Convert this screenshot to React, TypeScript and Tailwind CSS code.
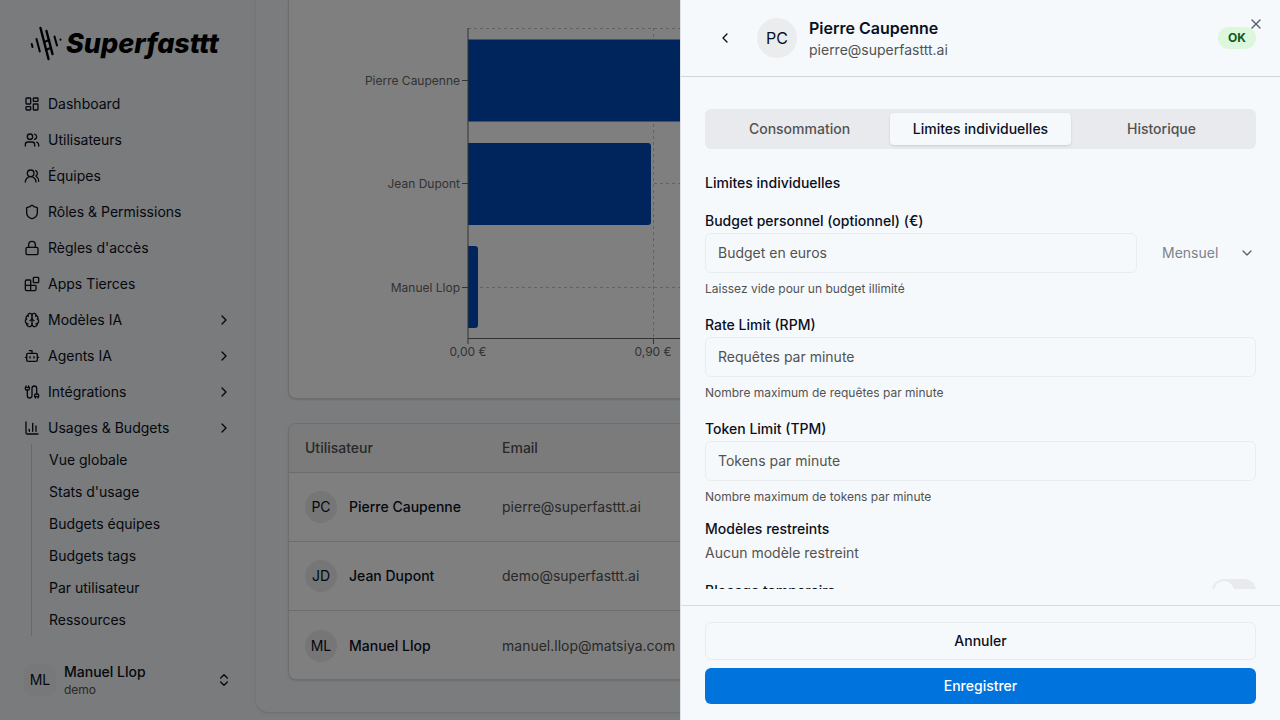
import { useState } from "react";
import {
  Blocks,
  Bot,
  Brain,
  ChartColumn,
  ChevronDown,
  ChevronLeft,
  ChevronRight,
  ChevronsUpDown,
  LayoutDashboard,
  Lock,
  Shield,
  Users,
  UsersRound,
  X,
} from "lucide-react";

interface NavItem {
  label: string;
  icon: React.ComponentType<{ className?: string }>;
  nested?: boolean;
}

function CableIcon({ className }: { className?: string }) {
  return (
    <svg
      className={className}
      viewBox="0 0 24 24"
      fill="none"
      stroke="currentColor"
      strokeWidth="2"
      strokeLinecap="round"
      strokeLinejoin="round"
    >
      <path d="M4 9a2 2 0 0 1-2-2V5h6v2a2 2 0 0 1-2 2ZM3 5V3M7 5V3" />
      <path d="M19 15V6.500a3.500 3.500 0 0 0-7 0v11a3.500 3.500 0 0 1-7 0V9" />
      <path d="M17 21v-2M21 21v-2M22 19h-6v-2a2 2 0 0 1 2-2h2a2 2 0 0 1 2 2Z" />
    </svg>
  );
}

const NAV: NavItem[] = [
  { label: "Dashboard", icon: LayoutDashboard },
  { label: "Utilisateurs", icon: Users },
  { label: "Équipes", icon: UsersRound },
  { label: "Rôles & Permissions", icon: Shield },
  { label: "Règles d'accès", icon: Lock },
  { label: "Apps Tierces", icon: Blocks },
  { label: "Modèles IA", icon: Brain, nested: true },
  { label: "Agents IA", icon: Bot, nested: true },
  { label: "Intégrations", icon: CableIcon, nested: true },
  { label: "Usages & Budgets", icon: ChartColumn, nested: true },
];

const SUB_NAV = [
  "Vue globale",
  "Stats d'usage",
  "Budgets équipes",
  "Budgets tags",
  "Par utilisateur",
  "Ressources",
];

const USERS = [
  { initials: "PC", name: "Pierre Caupenne", email: "pierre@superfasttt.ai" },
  { initials: "JD", name: "Jean Dupont", email: "demo@superfasttt.ai" },
  { initials: "ML", name: "Manuel Llop", email: "manuel.llop@matsiya.com" },
];

const TABS = ["Consommation", "Limites individuelles", "Historique"];

function Logo() {
  return (
    <div className="flex items-center gap-1 text-black">
      <svg width="34" height="36" viewBox="0 0 34 36" fill="none" stroke="currentColor" strokeWidth="2" strokeLinecap="round">
        <path d="M3.700 18l.8 3M8.500 13l3.300 12.500" />
        <path d="M12.500 2l8 31M18.500 5l6 23" strokeWidth="2.400" />
        <path d="M16 16l5.300-2M18 23.700l4.700-1.700" />
        <path d="M26.500 10.500l2.500 9M32.500 13.500v.2" />
      </svg>
      <span className="text-[27px] leading-8 font-extrabold italic">Superfasttt</span>
    </div>
  );
}

function Sidebar() {
  return (
    <aside className="flex w-64 shrink-0 flex-col">
      <div className="px-7 py-[26px]">
        <Logo />
      </div>
      <nav className="flex-1 px-4">
        <ul className="space-y-1">
          {NAV.map(({ label, icon: Icon, nested }) => (
            <li key={label}>
              <a href="#" className="flex h-8 items-center gap-2 px-2">
                <Icon className="size-4" />
                <span className="flex-1">{label}</span>
                {nested && <ChevronRight className="size-4" />}
              </a>
            </li>
          ))}
        </ul>
        <ul className="ml-[15px] border-l border-slate-300 pl-[17px]">
          {SUB_NAV.map((label) => (
            <li key={label}>
              <a href="#" className="flex h-8 items-center">
                {label}
              </a>
            </li>
          ))}
        </ul>
      </nav>
      <button className="m-4 flex h-12 items-center gap-2 px-2 text-left">
        <span className="flex size-8 items-center justify-center rounded-lg bg-[#f0f1f3]">ML</span>
        <span className="flex-1">
          <span className="block leading-5 font-medium">Manuel Llop</span>
          <span className="block text-xs leading-4 text-neutral-600">demo</span>
        </span>
        <ChevronsUpDown className="size-4" />
      </button>
    </aside>
  );
}

function BudgetChart() {
  return (
    <svg className="h-[398px] w-full" role="img" aria-label="Budget par utilisateur">
      <g stroke="#c4c4c4" strokeDasharray="3 3">
        <path d="M179 28.500h900M179 80.500h900M179 183.500h900M179 287.500h900M364.500 28v310M550.500 28v310" />
      </g>
      <g fill="#004ab8">
        <path d="M179 39.500h700v82H179z" />
        <path d="M179 143h180q3 0 3 3v76q0 3-3 3H179z" />
        <path d="M179 246h7q3 0 3 3v76q0 3-3 3h-7z" />
      </g>
      <g stroke="#666">
        <path d="M179 28v316M179 338.500h900M173 80.500h6M173 183.500h6M173 287.500h6M364.500 338v6" />
      </g>
      <g fill="#666" fontSize="12" textAnchor="end">
        <text x="171" y="85">Pierre Caupenne</text>
        <text x="171" y="188">Jean Dupont</text>
        <text x="171" y="292">Manuel Llop</text>
      </g>
      <g fill="#666" fontSize="12" textAnchor="middle">
        <text x="179" y="356">0,00 €</text>
        <text x="364" y="356">0,90 €</text>
      </g>
    </svg>
  );
}

function UsersTable() {
  return (
    <div className="overflow-hidden rounded-lg border border-[#dcdddf] bg-white shadow-sm">
      <table className="w-full text-left">
        <thead className="bg-[#f6f7f7] text-neutral-600">
          <tr className="h-12 border-b border-[#d6d8da]">
            <th className="w-[197px] px-4 font-medium">Utilisateur</th>
            <th className="px-4 font-medium">Email</th>
          </tr>
        </thead>
        <tbody>
          {USERS.map((user) => (
            <tr key={user.name} className="h-[69px] border-b border-[#d6d8da] last:h-[71px] last:border-b-0">
              <td className="px-4">
                <div className="flex items-center gap-3 whitespace-nowrap">
                  <span className="flex size-8 items-center justify-center rounded-full bg-[#ececee]">
                    {user.initials}
                  </span>
                  <span className="font-medium">{user.name}</span>
                </div>
              </td>
              <td className="px-4 text-neutral-600">{user.email}</td>
            </tr>
          ))}
        </tbody>
      </table>
    </div>
  );
}

interface LimitFieldProps {
  id: string;
  label: string;
  placeholder: string;
  hint: string;
  children?: React.ReactNode;
}

function LimitField({ id, label, placeholder, hint, children }: LimitFieldProps) {
  return (
    <div>
      <label htmlFor={id} className="block h-6 leading-6 font-medium">
        {label}
      </label>
      <div className="flex gap-2">
        <input
          id={id}
          placeholder={placeholder}
          className="h-10 min-w-0 flex-1 rounded-md border border-[#eaedf0] bg-transparent px-3 pb-0.5 placeholder:text-neutral-600"
        />
        {children}
      </div>
      <p className="mt-2 text-xs leading-4 text-neutral-600">{hint}</p>
    </div>
  );
}

function UserSheet() {
  const [tab, setTab] = useState(TABS[1]);

  return (
    <div
      role="dialog"
      aria-label="Pierre Caupenne"
      className="fixed inset-y-0 right-0 flex w-[600px] flex-col border-l border-[#dfe3e8] bg-[#f6f9fc]"
    >
      <header className="flex h-[77px] shrink-0 items-center border-b border-[#cfd6de] px-6">
        <button aria-label="Retour" className="flex size-10 items-center justify-center">
          <ChevronLeft className="size-4" />
        </button>
        <span className="ml-3 flex size-10 items-center justify-center rounded-full bg-[#ebecee] text-base">PC</span>
        <div className="ml-3 flex-1">
          <h2 className="text-base leading-6 font-semibold">Pierre Caupenne</h2>
          <p className="leading-5 text-neutral-600">pierre@superfasttt.ai</p>
        </div>
        <span className="rounded-full bg-[#dcf7dc] px-2.5 py-0.5 text-xs leading-[18px] font-bold text-[#0f5a1a]">
          OK
        </span>
      </header>
      <button aria-label="Fermer" className="absolute top-4 right-4 text-[#5a606c]">
        <X className="size-4" />
      </button>

      <div className="mb-4 min-h-0 flex-1 overflow-hidden px-6 pt-8">
        <div role="tablist" className="flex h-10 rounded-md bg-[#e9eaed] p-1">
          {TABS.map((label) => (
            <button
              key={label}
              role="tab"
              aria-selected={tab === label}
              onClick={() => setTab(label)}
              className={
                tab === label
                  ? "flex-1 rounded-sm bg-[#f6f9fc] font-medium shadow-sm"
                  : "flex-1 rounded-sm font-medium text-neutral-600"
              }
            >
              {label}
            </button>
          ))}
        </div>

        <h3 className="mt-6 mb-4 leading-5 font-medium">Limites individuelles</h3>
        <div className="space-y-4">
          <LimitField
            id="budget"
            label="Budget personnel (optionnel) (€)"
            placeholder="Budget en euros"
            hint="Laissez vide pour un budget illimité"
          >
            <div className="relative w-[111px]">
              <select
                aria-label="Période"
                disabled
                className="h-10 w-full appearance-none rounded-md border border-transparent bg-transparent px-4 text-[#7f8286] opacity-100"
              >
                <option>Mensuel</option>
              </select>
              <ChevronDown className="pointer-events-none absolute top-3 right-px size-4 text-[#5f6266]" />
            </div>
          </LimitField>
          <LimitField
            id="rpm"
            label="Rate Limit (RPM)"
            placeholder="Requêtes par minute"
            hint="Nombre maximum de requêtes par minute"
          />
          <LimitField
            id="tpm"
            label="Token Limit (TPM)"
            placeholder="Tokens par minute"
            hint="Nombre maximum de tokens par minute"
          />
        </div>
        <h4 className="mt-3 leading-6 font-medium">Modèles restreints</h4>
        <p className="mt-0.5 leading-5 text-neutral-600">Aucun modèle restreint</p>
        <div className="mt-4 flex items-center justify-between">
          <label htmlFor="blocage" className="font-medium">
            Blocage temporaire
          </label>
          <input
            id="blocage"
            type="checkbox"
            role="switch"
            className="h-6 w-11 appearance-none rounded-full bg-[#e9eaed] before:m-0.5 before:block before:size-5 before:rounded-full before:bg-[#f6f9fc]"
          />
        </div>
      </div>

      <footer className="flex flex-col gap-2 border-t border-[#d5dbe1] px-6 py-4">
        <button className="h-[38px] rounded-md border border-[#eaedf0] font-medium">Annuler</button>
        <button className="h-9 rounded-md bg-[#0073dd] font-medium text-white">Enregistrer</button>
      </footer>
    </div>
  );
}

export default function App() {
  return (
    <div className="flex h-screen overflow-hidden bg-[#f3f6f8] font-['Inter',sans-serif] text-sm text-[#0a101c]">
      <Sidebar />
      <main className="mb-2 flex min-w-0 flex-1 flex-col justify-end gap-6 rounded-b-xl bg-[#f6f9fc] px-8 pb-8 shadow-sm">
        <section className="rounded-b-lg border border-t-0 border-[#dcdddf] bg-white shadow-sm">
          <BudgetChart />
        </section>
        <UsersTable />
      </main>
      <div className="fixed inset-0 bg-black/50" />
      <UserSheet />
    </div>
  );
}
